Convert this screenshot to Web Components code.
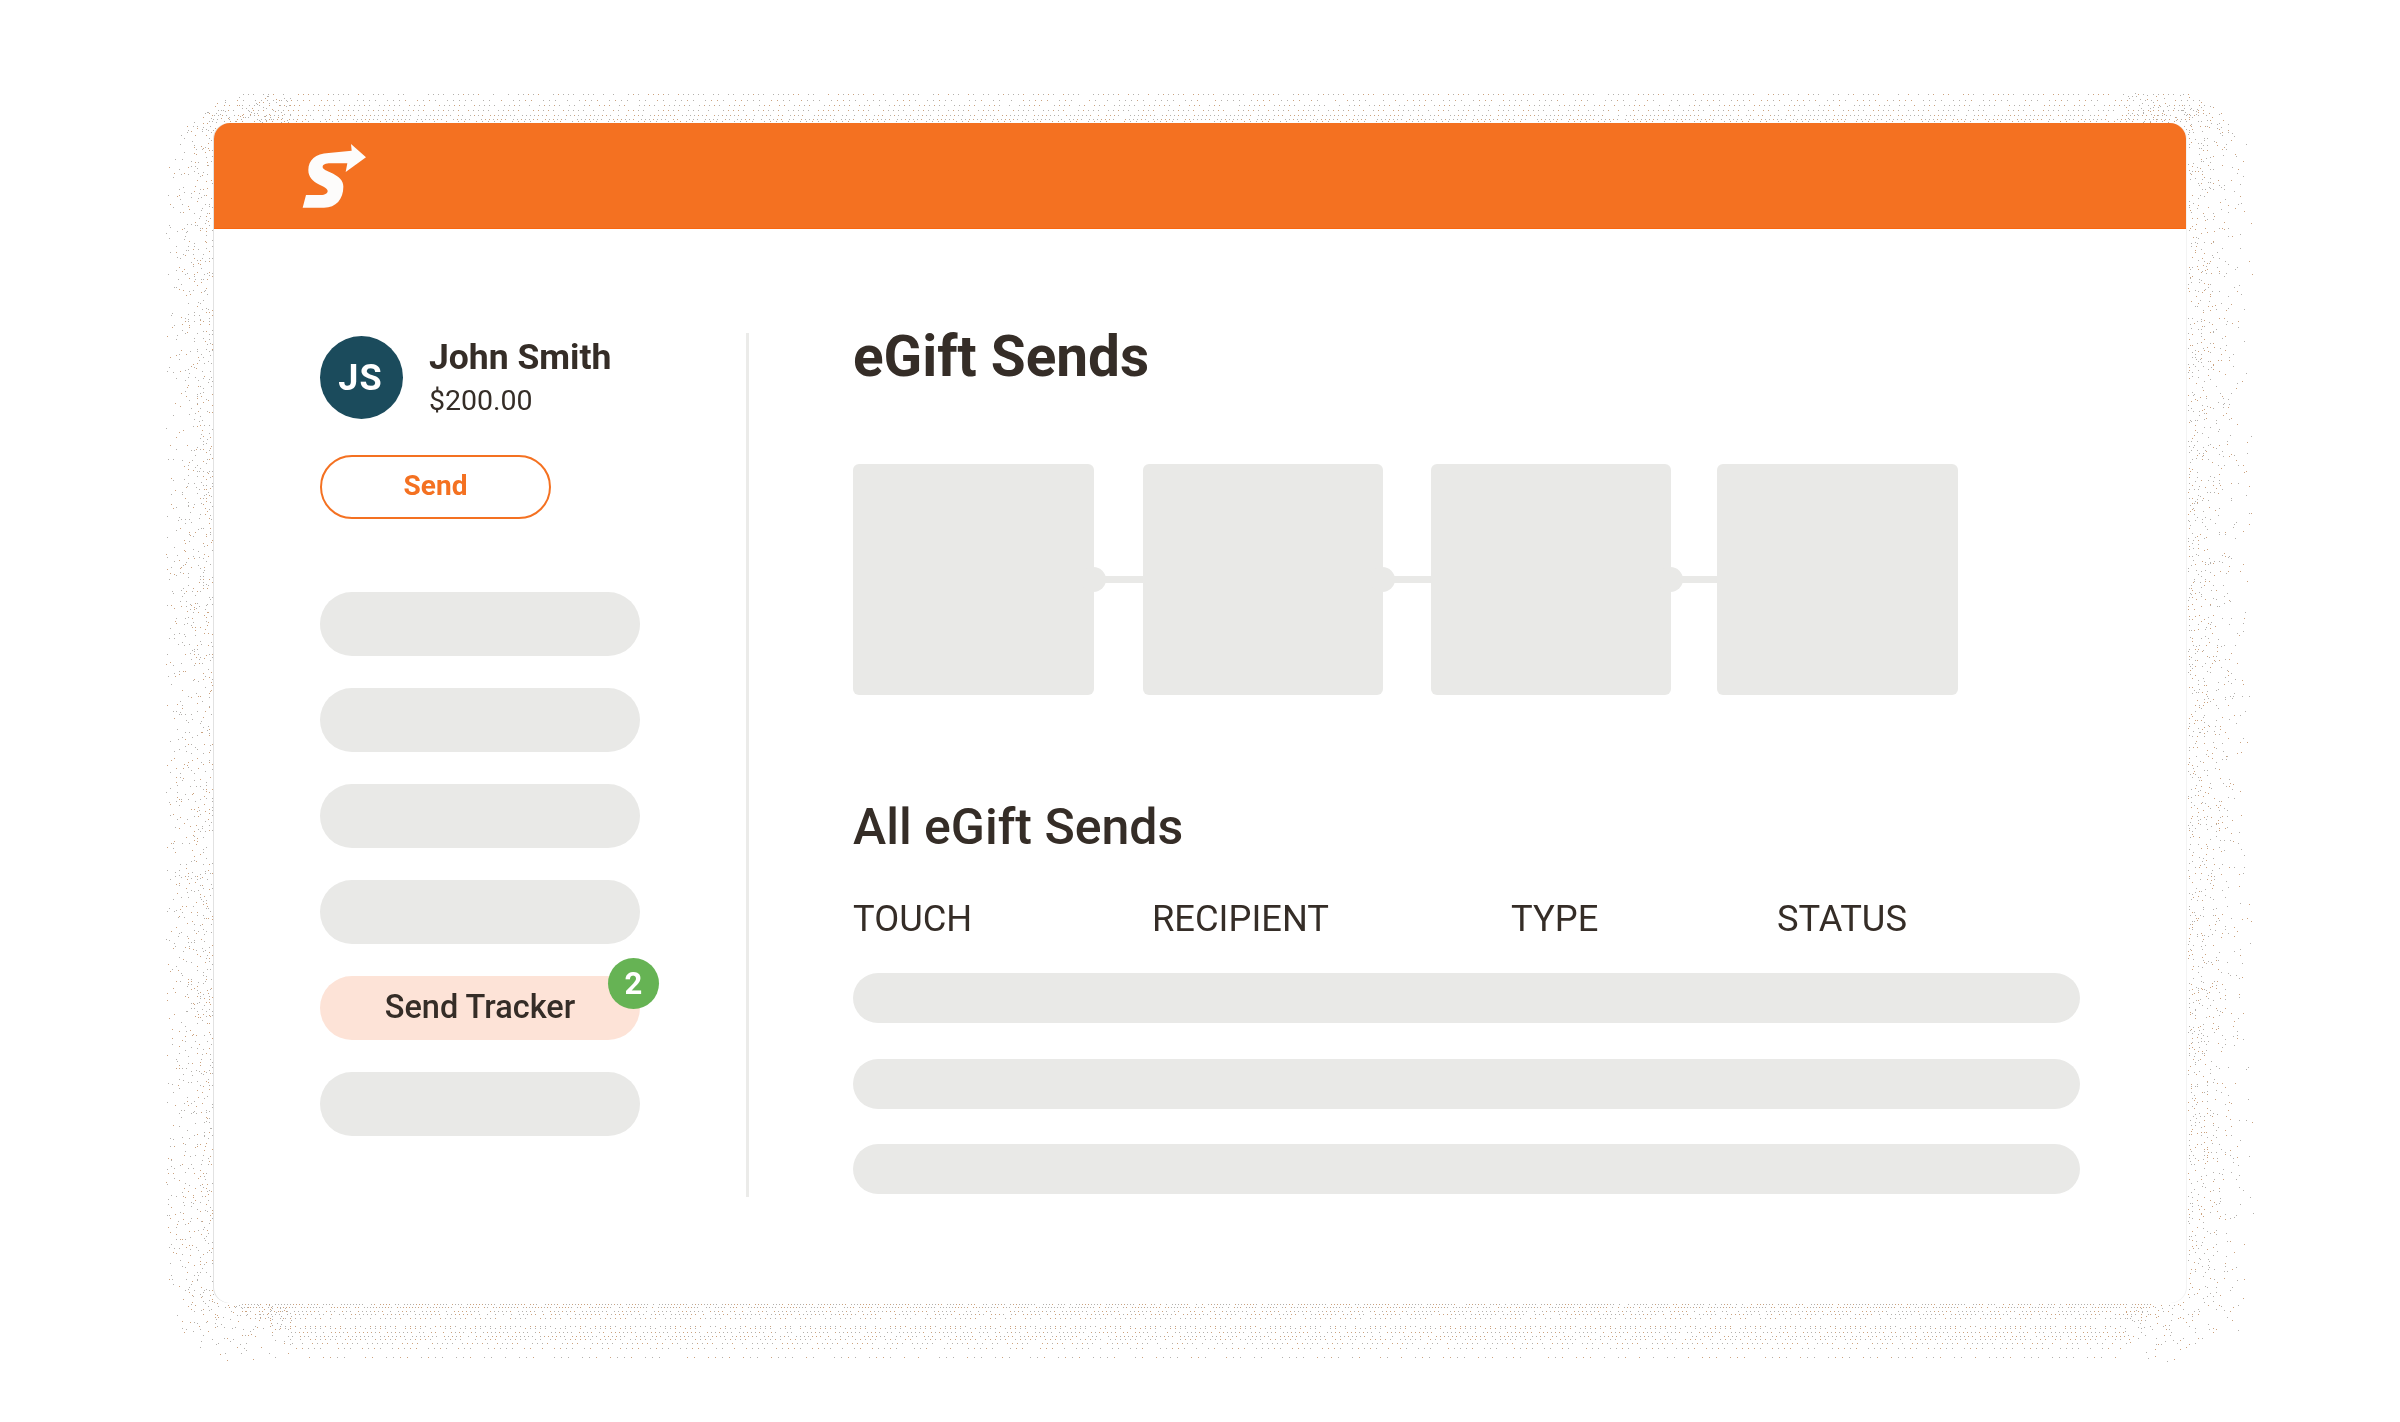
<!DOCTYPE html>
<html lang="en">
<head>
<meta charset="utf-8">
<title>eGift Sends</title>
<style>
    html, body { margin: 0; padding: 0; background: #fff; }
    body { font-family: Roboto, "Liberation Sans", sans-serif; color: #352d27; }
</style>
</head>
<body>

<app-frame>
    <brand-bar slot="top"></brand-bar>
    <side-nav slot="side">
        <user-chip initials="JS" name="John Smith" amount="$200.00"></user-chip>
        <send-button>Send</send-button>
        <div class="pills" style="display:flex;flex-direction:column;gap:32px;margin-top:73px">
            <nav-pill></nav-pill>
            <nav-pill></nav-pill>
            <nav-pill></nav-pill>
            <nav-pill></nav-pill>
            <nav-pill active badge="2">Send Tracker</nav-pill>
            <nav-pill></nav-pill>
        </div>
    </side-nav>
    <main-panel slot="main">
        <tile-flow></tile-flow>
        <send-table></send-table>
    </main-panel>
</app-frame>

<script>
// Dotted halo behind the card, the reference has it as a dithered shadow
class DitherHalo extends HTMLElement {
    constructor() {
        super();
        const shadow = this.attachShadow({ mode: 'open' });
        shadow.innerHTML = `
            <style>
                :host { position: absolute; left: 0; top: 0; z-index: 0; display: block; }
                canvas { display: block; }
            </style>
            <canvas width="2400" height="1422"></canvas>
        `;
        this.draw(shadow.querySelector('canvas').getContext('2d'));
    }

    draw(ctx) {
        let seed = 1337;
        const rnd = () => {
            seed = (seed * 16807) % 2147483647;
            return seed / 2147483647;
        };
        const dot = (x, y) => {
            ctx.fillStyle = rnd() < 0.4 ? '#cba27e' : '#b3b0ac';
            ctx.fillRect(Math.round(x), Math.round(y), 1, 1);
        };

        const L = 213, T = 123, R = 2187, B = 1303;

        // distance from a point to a rounded box, negative inside
        const boxDist = (x, y, x0, y0, x1, y1, r) => {
            const dx = Math.max(x0 + r - x, x - (x1 - r), 0);
            const dy = Math.max(y0 + r - y, y - (y1 - r), 0);
            const out = Math.hypot(dx, dy);
            const inner = Math.min(Math.max(x0 + r - x, x - (x1 - r)), 0) + 0;
            return out + Math.max(inner, Math.min(Math.max(y0 + r - y, y - (y1 - r)), 0)) - r;
        };

        // scattered dots on the sides and round the corners
        for (let y = 92; y < 1372; y += 3) {
            for (let x = 160; x < 2262; x += 3) {
                const inBand = (y < T || y >= B) && x > 290 && x < 2125;
                if (inBand) continue;
                const px = x + rnd() * 2, py = y + rnd() * 2;
                const d = boxDist(px, py, L, T, R, B, 16);
                if (d <= 0.5) continue;
                if (boxDist(px, py, 166, 93, 2257, 1370, 92) > 0) continue;
                const t = Math.min(d / 68, 1);
                if (rnd() < 0.42 * Math.pow(1 - t, 1.3)) dot(px, py);
            }
        }

        // top and bottom are regular rows of dots
        const rows = [
            [94, 5, 243, 2190], [100, 6, 232, 2200], [105, 5, 224, 2205], [110, 5, 218, 2208],
            [115, 4, 214, 2210], [119, 4, 212, 2190], [121, 6, 212, 2187],
            [1304, 3, 240, 2153], [1307, 3, 240, 2150], [1311, 4, 245, 2146], [1314, 4, 245, 2142], [1318, 5, 250, 2136],
            [1326, 5, 280, 2128], [1328, 5, 280, 2128], [1332, 4, 285, 2128], [1336, 4, 285, 2128],
            [1339, 5, 290, 2128], [1343, 5, 292, 2125], [1348, 6, 296, 2122], [1357, 7, 305, 2118]
        ];
        rows.forEach(([y, step, from, to], i) => {
            for (let x = from + (i * 5) % step; x < to; x += step) {
                if ((x + i * 7) % 32 < step) continue;
                if (rnd() < 0.1) continue;
                dot(x, y);
            }
        });
    }
}
customElements.define('dither-halo', DitherHalo);

class AppFrame extends HTMLElement {
    constructor() {
        super();
        const shadow = this.attachShadow({ mode: 'open' });
        shadow.innerHTML = `
            <style>
                :host {
                    display: block;
                    position: relative;
                    width: 2400px;
                    height: 1422px;
                    box-sizing: border-box;
                    padding: 123px 214px 0 214px;
                    overflow: hidden;
                }
                .card {
                    position: relative;
                    z-index: 1;
                    width: 1972px;
                    height: 1180px;
                    background: #fff;
                    border-radius: 16px;
                    box-shadow: -1px 0 0 #e2e2e2, 1px 0 0 #f3f3f3;
                }
                .body {
                    display: flex;
                    padding-top: 104px;
                }
            </style>
            <dither-halo></dither-halo>
            <div class="card">
                <slot name="top"></slot>
                <div class="body">
                    <slot name="side"></slot>
                    <slot name="main"></slot>
                </div>
            </div>
        `;
    }
}
customElements.define('app-frame', AppFrame);

class BrandBar extends HTMLElement {
    constructor() {
        super();
        const shadow = this.attachShadow({ mode: 'open' });
        shadow.innerHTML = `
            <style>
                :host {
                    display: flex;
                    align-items: center;
                    box-sizing: border-box;
                    height: 106px;
                    padding-left: 66px;
                    background: #f47121;
                    border-bottom: 1px solid #f9660f;
                    border-radius: 16px 16px 0 0;
                }
                svg { display: block; margin-top: -2px; }
            </style>
            <svg width="100" height="90" viewBox="0 0 300 270" aria-label="logo">
                <path fill="#fdfcfb" d="M213 42 L258 82 L197 126 L202 100 L152 100
                    C136 100 128 104 128 111 C128 117 136 120 150 127
                    C178 140 190 152 190 170 C190 207 168 233 132 233
                    L68 233 L78 195 L122 195 C136 195 143 190 143 183
                    C143 176 134 172 120 165 C96 153 85 140 85 120
                    C85 90 106 71 146 69 L215 62 Z"/>
            </svg>
        `;
    }
}
customElements.define('brand-bar', BrandBar);

class SideNav extends HTMLElement {
    constructor() {
        super();
        const shadow = this.attachShadow({ mode: 'open' });
        shadow.innerHTML = `
            <style>
                :host {
                    display: block;
                    box-sizing: border-box;
                    width: 535px;
                    height: 864px;
                    padding: 3px 0 0 106px;
                    border-right: 3px solid #ebebe9;
                    flex: none;
                }
                .inner { width: 320px; }
            </style>
            <div class="inner"><slot></slot></div>
        `;
    }
}
customElements.define('side-nav', SideNav);

class UserChip extends HTMLElement {
    constructor() {
        super();
        const shadow = this.attachShadow({ mode: 'open' });
        shadow.innerHTML = `
            <style>
                :host { display: flex; align-items: center; gap: 26px; height: 83px; }
                .avatar {
                    width: 83px;
                    height: 83px;
                    box-sizing: border-box;
                    padding-right: 2px;
                    border-radius: 50%;
                    background: #1b4b5c;
                    color: #fff;
                    display: flex;
                    align-items: center;
                    justify-content: center;
                    font: 700 36px Roboto, sans-serif;
                    letter-spacing: 1px;
                    flex: none;
                }
                .name { font: 700 35.5px/40px Roboto, sans-serif; color: #352d27; margin-top: -1px; }
                .amount { font: 400 28.5px/32px Roboto, sans-serif; color: #352d27; margin-top: 8px; }
            </style>
            <div class="avatar">${this.getAttribute('initials')}</div>
            <div>
                <div class="name">${this.getAttribute('name')}</div>
                <div class="amount">${this.getAttribute('amount')}</div>
            </div>
        `;
    }
}
customElements.define('user-chip', UserChip);

class SendButton extends HTMLElement {
    constructor() {
        super();
        const shadow = this.attachShadow({ mode: 'open' });
        shadow.innerHTML = `
            <style>
                :host {
                    display: flex;
                    align-items: center;
                    justify-content: center;
                    box-sizing: border-box;
                    width: 231px;
                    height: 64px;
                    margin-top: 36px;
                    padding-bottom: 4px;
                    background: #fff;
                    border: 2px solid #f47121;
                    border-radius: 32px;
                    color: #f47121;
                    font: 700 28px Roboto, sans-serif;
                }
            </style>
            <slot></slot>
        `;
    }
}
customElements.define('send-button', SendButton);

class NavPill extends HTMLElement {
    constructor() {
        super();
        const shadow = this.attachShadow({ mode: 'open' });
        const badge = this.getAttribute('badge');
        shadow.innerHTML = `
            <style>
                :host {
                    display: flex;
                    align-items: center;
                    justify-content: center;
                    position: relative;
                    box-sizing: border-box;
                    height: 64px;
                    padding-bottom: 2px;
                    border-radius: 32px;
                    background: #e9e9e7;
                    color: #352d27;
                    font: 500 32.5px Roboto, sans-serif;
                }
                :host([active]) { background: #fde3d7; }
                .badge {
                    position: absolute;
                    left: 288px;
                    top: -18px;
                    width: 51px;
                    height: 51px;
                    border-radius: 50%;
                    background: #66b354;
                    color: #fff;
                    display: flex;
                    align-items: center;
                    justify-content: center;
                    font: 700 31px Roboto, sans-serif;
                }
            </style>
            <slot></slot>
            ${badge ? `<span class="badge">${badge}</span>` : ''}
        `;
    }
}
customElements.define('nav-pill', NavPill);

class MainPanel extends HTMLElement {
    constructor() {
        super();
        const shadow = this.attachShadow({ mode: 'open' });
        shadow.innerHTML = `
            <style>
                :host { display: block; box-sizing: border-box; padding-left: 104px; width: 1331px; }
                h1 { margin: 0; height: 131px; font: 700 56.7px/48px Roboto, sans-serif; color: #352d27; }
            </style>
            <h1>eGift Sends</h1>
            <slot></slot>
        `;
    }
}
customElements.define('main-panel', MainPanel);

class TileFlow extends HTMLElement {
    constructor() {
        super();
        const shadow = this.attachShadow({ mode: 'open' });
        shadow.innerHTML = `
            <style>
                :host { display: flex; height: 231px; }
                .tile { background: #e9e9e7; border-radius: 6px; flex: none; }
                .link { display: flex; align-items: center; flex: none; }
                .dot { width: 25px; height: 25px; margin-left: -13px; border-radius: 50%; background: #e9e9e7; flex: none; }
                .bar { height: 7px; flex: 1; background: #e9e9e7; margin-left: -1px; }
            </style>
            <div class="tile" style="width:241px"></div>
            <div class="link" style="width:49px"><div class="dot"></div><div class="bar"></div></div>
            <div class="tile" style="width:240px"></div>
            <div class="link" style="width:48px"><div class="dot"></div><div class="bar"></div></div>
            <div class="tile" style="width:240px"></div>
            <div class="link" style="width:46px"><div class="dot"></div><div class="bar"></div></div>
            <div class="tile" style="width:241px"></div>
        `;
    }
}
customElements.define('tile-flow', TileFlow);

class SendTable extends HTMLElement {
    constructor() {
        super();
        const shadow = this.attachShadow({ mode: 'open' });
        shadow.innerHTML = `
            <style>
                :host { display: block; padding-top: 104px; width: 1227px; }
                h2 { margin: 0; font: 500 50px/56px Roboto, sans-serif; color: #352d27; }
                .head {
                    display: grid;
                    grid-template-columns: 299px 359px 266px 1fr;
                    margin-top: 43px;
                    font: 400 36.3px/42px Roboto, sans-serif;
                    color: #352d27;
                }
                .rows { display: flex; flex-direction: column; gap: 35.5px; margin-top: 33px; }
                .row { height: 50px; border-radius: 25px; background: #e9e9e7; }
            </style>
            <h2>All eGift Sends</h2>
            <div class="head">
                <span>TOUCH</span>
                <span>RECIPIENT</span>
                <span>TYPE</span>
                <span>STATUS</span>
            </div>
            <div class="rows">
                <div class="row"></div>
                <div class="row"></div>
                <div class="row"></div>
            </div>
        `;
    }
}
customElements.define('send-table', SendTable);
</script>
</body>
</html>
